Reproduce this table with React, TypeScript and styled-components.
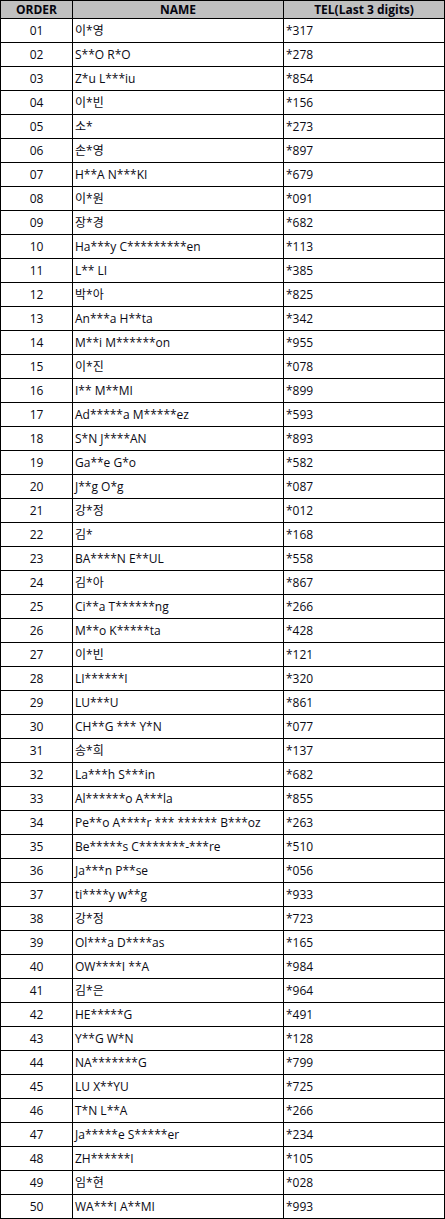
import * as React from 'react'
import styled, { createGlobalStyle } from 'styled-components'

const GlobalStyle = createGlobalStyle`
  html, body {
    margin: 0;
    padding: 0;
    background: #ffffff;
  }
`

const rows: [string, string][] = [
  ['이*영', '*317'],
  ['S**O R*O', '*278'],
  ['Z*u L***iu', '*854'],
  ['이*빈', '*156'],
  ['소*', '*273'],
  ['손*영', '*897'],
  ['H**A N***KI', '*679'],
  ['이*원', '*091'],
  ['장*경', '*682'],
  ['Ha***y C*********en', '*113'],
  ['L** LI', '*385'],
  ['박*아', '*825'],
  ['An***a H**ta', '*342'],
  ['M**i M******on', '*955'],
  ['이*진', '*078'],
  ['I** M**MI', '*899'],
  ['Ad*****a M*****ez', '*593'],
  ['S*N J****AN', '*893'],
  ['Ga**e G*o', '*582'],
  ['J**g O*g', '*087'],
  ['강*정', '*012'],
  ['김*', '*168'],
  ['BA****N E**UL', '*558'],
  ['김*아', '*867'],
  ['Ci**a T******ng', '*266'],
  ['M**o K*****ta', '*428'],
  ['이*빈', '*121'],
  ['LI******I', '*320'],
  ['LU***U', '*861'],
  ['CH**G *** Y*N', '*077'],
  ['송*희', '*137'],
  ['La***h S***in', '*682'],
  ['Al******o A***la', '*855'],
  ['Pe**o A****r *** ****** B***oz', '*263'],
  ['Be*****s C*******-***re', '*510'],
  ['Ja***n P**se', '*056'],
  ['ti****y w**g', '*933'],
  ['강*정', '*723'],
  ['Ol***a D****as', '*165'],
  ['OW****I **A', '*984'],
  ['김*은', '*964'],
  ['HE*****G', '*491'],
  ['Y**G W*N', '*128'],
  ['NA*******G', '*799'],
  ['LU X**YU', '*725'],
  ['T*N L**A', '*266'],
  ['Ja*****e S*****er', '*234'],
  ['ZH******I', '*105'],
  ['임*현', '*028'],
  ['WA***I A**MI', '*993'],
]

const Table = styled.table`
  width: 445px;
  table-layout: fixed;
  border-collapse: separate;
  border-spacing: 1px;
  background: #000000;
  font-family: 'Open Sans', 'Noto Sans CJK KR', sans-serif;
  font-size: 12px;
  color: #0a0a14;
`

const HeadCell = styled.th<{ $w: number }>`
  width: ${(p) => p.$w}px;
  height: 17px;
  padding: 0;
  background: #c0c0c0;
  font-weight: 700;
  text-align: center;
  line-height: 17px;
  color: #05050f;
`

const Cell = styled.td<{ $center?: boolean }>`
  height: 23px;
  padding: 0 0 0 ${(p) => (p.$center ? 0 : 2)}px;
  background: #ffffff;
  text-align: ${(p) => (p.$center ? 'center' : 'left')};
  line-height: 23px;
  white-space: nowrap;
  overflow: hidden;
`

export default function App() {
  return (
    <>
      <GlobalStyle />
      <Table>
        <thead>
          <tr>
            <HeadCell $w={71}>ORDER</HeadCell>
            <HeadCell $w={210}>NAME</HeadCell>
            <HeadCell $w={160}>TEL(Last 3 digits)</HeadCell>
          </tr>
        </thead>
        <tbody>
          {rows.map(([name, tel], i) => (
            <tr key={i}>
              <Cell $center>{String(i + 1).padStart(2, '0')}</Cell>
              <Cell>{name}</Cell>
              <Cell>{tel}</Cell>
            </tr>
          ))}
        </tbody>
      </Table>
    </>
  )
}
